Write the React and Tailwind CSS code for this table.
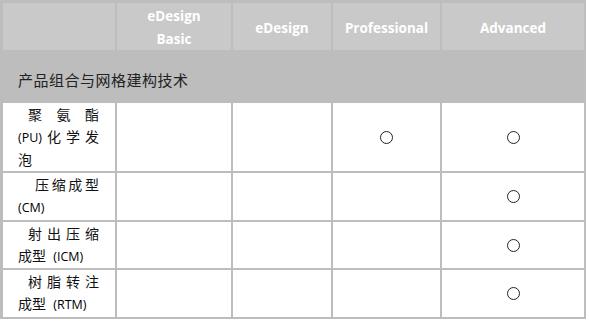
import { Fragment } from "react";

const font = { fontFamily: '"Open Sans", "Noto Sans CJK SC", sans-serif' };

const Spread = ({ chars, pl = "pl-[15px]" }) => (
  <div className={`flex justify-between pr-[16px] ${pl}`}>
    {chars.map((c, i) => (
      <span key={i}>{c}</span>
    ))}
  </div>
);

const Latin = ({ children }) => <span className="text-[12.5px] text-black">{children}</span>;

const Circle = () => <div className="w-[13px] h-[13px] rounded-full border border-[#222]" />;

const rows = [
  {
    label: (
      <>
        <Spread chars={["聚", "氨", "酯"]} pl="pl-[25px]" />
        <Spread chars={[<Latin>(PU)</Latin>, "化", "学", "发"]} />
        <div className="pl-[15px]">泡</div>
      </>
    ),
    marks: [false, false, true, true],
  },
  {
    label: (
      <>
        <Spread chars={["压", "缩", "成", "型"]} pl="pl-[32px]" />
        <div className="pl-[15px]">
          <Latin>(CM)</Latin>
        </div>
      </>
    ),
    marks: [false, false, false, true],
  },
  {
    label: (
      <>
        <Spread chars={["射", "出", "压", "缩"]} pl="pl-[25px]" />
        <div className="pl-[15px]">
          成型&nbsp;&nbsp;<Latin>(ICM)</Latin>
        </div>
      </>
    ),
    marks: [false, false, false, true],
  },
  {
    label: (
      <>
        <Spread chars={["树", "脂", "转", "注"]} pl="pl-[25px]" />
        <div className="pl-[15px]">
          成型&nbsp;&nbsp;<Latin>(RTM)</Latin>
        </div>
      </>
    ),
    marks: [false, false, false, true],
  },
];

export default function App() {
  return (
    <div className="w-[589px] h-[323px] bg-white" style={font}>
      <div className="w-[586px] bg-[#bdbdbd] pt-[3px] pl-[3px] pr-[2px] pb-[2px]">
        <div className="grid grid-cols-[112px_114px_98px_107px_142px] grid-rows-[47px_49px_68px_47px_46px_47px] gap-[2px]">
          <div className="bg-[#c9c9c9]" />
          {["eDesign Basic", "eDesign", "Professional", "Advanced"].map((h) => (
            <div
              key={h}
              className="bg-[#c9c9c9] flex items-center justify-center text-center text-white font-bold text-[13.5px] leading-[23px] pt-[3px] px-6"
            >
              {h}
            </div>
          ))}

          <div className="col-span-5 flex items-center pl-[15px] pt-[8px] text-[15px] text-[#222] tracking-[0.5px]">
            产品组合与网格建构技术
          </div>

          {rows.map((r, i) => (
            <Fragment key={i}>
              <div className="bg-white flex flex-col justify-center text-[14px] leading-[22px] text-[#111]">
                {r.label}
              </div>
              {r.marks.map((m, j) => (
                <div key={j} className="bg-white flex items-center justify-center">
                  {m && <Circle />}
                </div>
              ))}
            </Fragment>
          ))}
        </div>
      </div>
    </div>
  );
}
